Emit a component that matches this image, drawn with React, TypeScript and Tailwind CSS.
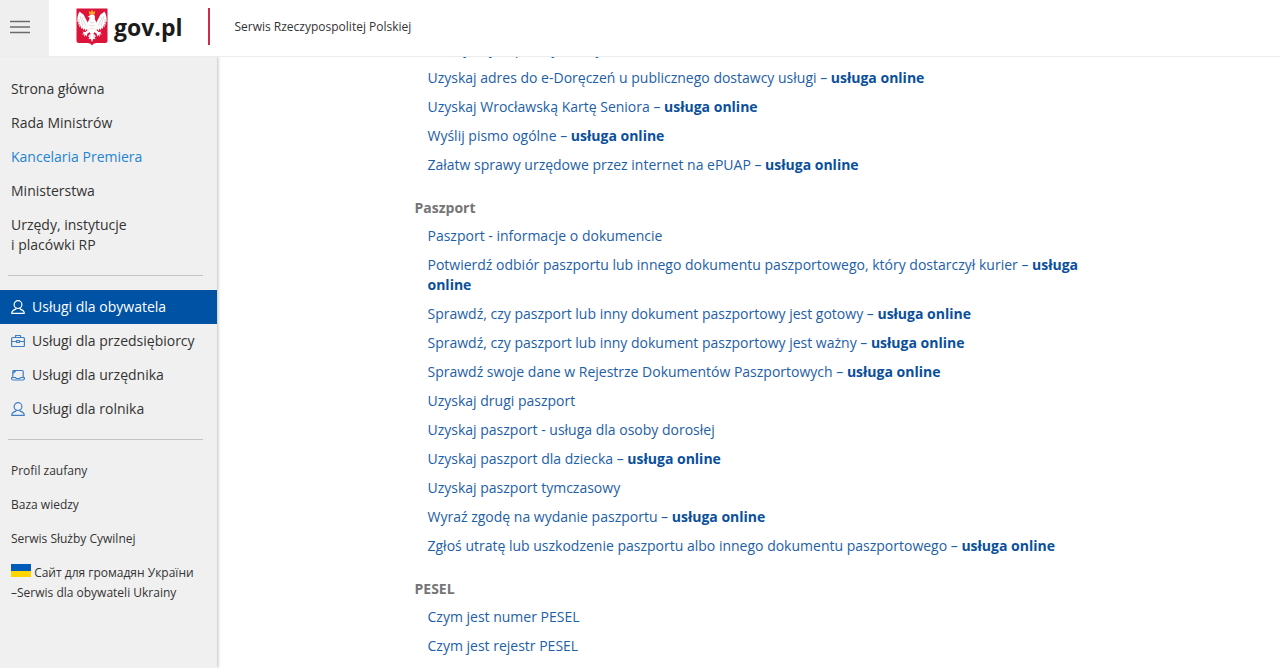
import type { ReactNode } from 'react';

type Item = { label: string; online?: boolean };

const pages = ['Strona główna', 'Rada Ministrów', 'Kancelaria Premiera', 'Ministerstwa'];

const eUslugi: Item[] = [
    { label: 'Skorzystaj z aplikacji mObywatel', online: true },
    { label: 'Uzyskaj adres do e-Doręczeń u publicznego dostawcy usługi', online: true },
    { label: 'Uzyskaj Wrocławską Kartę Seniora', online: true },
    { label: 'Wyślij pismo ogólne', online: true },
    { label: 'Załatw sprawy urzędowe przez internet na ePUAP', online: true },
];

const paszport: Item[] = [
    { label: 'Paszport - informacje o dokumencie' },
    { label: 'Potwierdź odbiór paszportu lub innego dokumentu paszportowego, który dostarczył kurier', online: true },
    { label: 'Sprawdź, czy paszport lub inny dokument paszportowy jest gotowy', online: true },
    { label: 'Sprawdź, czy paszport lub inny dokument paszportowy jest ważny', online: true },
    { label: 'Sprawdź swoje dane w Rejestrze Dokumentów Paszportowych', online: true },
    { label: 'Uzyskaj drugi paszport' },
    { label: 'Uzyskaj paszport - usługa dla osoby dorosłej' },
    { label: 'Uzyskaj paszport dla dziecka', online: true },
    { label: 'Uzyskaj paszport tymczasowy' },
    { label: 'Wyraź zgodę na wydanie paszportu', online: true },
    { label: 'Zgłoś utratę lub uszkodzenie paszportu albo innego dokumentu paszportowego', online: true },
];

const pesel: Item[] = [{ label: 'Czym jest numer PESEL' }, { label: 'Czym jest rejestr PESEL' }];

const Icon = ({ children }: { children: ReactNode }) => (
    <svg viewBox="0 0 14 14" className="h-[14px] w-[14px] shrink-0" fill="none" stroke="currentColor" strokeWidth="1.2" strokeLinejoin="round" aria-hidden="true">
        {children}
    </svg>
);

const PersonIcon = () => (
    <Icon>
        <circle cx="7" cy="4.6" r="3.9" />
        <path d="M4.9 8.2v.9C2.3 9.9.7 10.9.7 13.3h12.6c0-2.4-1.6-3.4-4.2-4.2v-.9" />
    </Icon>
);

const BriefcaseIcon = () => (
    <Icon>
        <rect x=".6" y="3.5" width="12.8" height="9" rx="1" />
        <path d="M4.5 3.5v-2h5v2M.6 7.5h5M8.4 7.5h5M5.6 6.5h2.8v2H5.6z" />
    </Icon>
);

const LaptopIcon = () => (
    <Icon>
        <path d="M1.8 9.5v-6q0-1 1-1h8.4q1 0 1 1v6" />
        <path d="M2.4 3h3L2.4 6z" fill="currentColor" stroke="none" />
        <path d="M.6 9.5h4l.6 1h3.6l.6-1h4v1q0 1.5-1.5 1.5H2.1Q.6 12 .6 10.5z" />
    </Icon>
);

const services = [
    { label: 'Usługi dla obywatela', icon: <PersonIcon />, active: true },
    { label: 'Usługi dla przedsiębiorcy', icon: <BriefcaseIcon /> },
    { label: 'Usługi dla urzędnika', icon: <LaptopIcon /> },
    { label: 'Usługi dla rolnika', icon: <PersonIcon /> },
];

const Emblem = () => (
    <svg viewBox="0 0 32 38" className="h-[38px] w-8" aria-hidden="true">
        <path d="M.5.5h31v32q0 2.500-2.500 2.500H20q-3 0-4 2.500Q15 35 12 35H3Q.5 35 .5 32.500z" fill="#dc143c" />
        <g fill="#fff">
            <path d="M13.5 17C11 14 9.5 10 7.5 6.5 6 5.500 4.500 4.500 3.500 3.500 1.500 7 1 11 1.500 14l1.200-.3-.7 3 1.600-.7-.4 3.200 1.600-1.200.2 3 1.500-1.500.6 2.700 1.300-1.700 1.100 2.400 1.100-2 1.400 1.600 1-2.500z" />
            <path d="M18.5 17C21 14 22.500 10 24.500 6.500c1.500-1 3-2 4-3C30.500 7 31 11 30.500 14l-1.200-.3.7 3-1.600-.7.4 3.200-1.600-1.200-.2 3-1.500-1.500-.6 2.700-1.300-1.700-1.100 2.400-1.100-2-1.400 1.600-1-2.500z" />
            <path d="M13.8 7.500q2-2 4.400-.5 1.300 1.500.6 4 2.200 3 1.700 7.500-.5 4.500-3 7l2.500 2.700-1.500 1 1 2-2.200-.5L16 34l-1.300-3.300-2.200.5 1-2-1.500-1 2.500-2.700q-2.500-2.500-3-7-.5-4.500 2.100-8l-.5-1.500-1.700-.4z" />
            <path d="M12 21.500 9.500 24l-3.200-.3 1.700 1.300-2.200 1.500 2.800-.2-.7 2.400 2-1.800.9 1.900.5-3 2.700-2zM20 21.500l2.500 2.500 3.200-.3-1.700 1.300 2.200 1.500-2.800-.2.7 2.400-2-1.800-.9 1.900-.5-3-2.700-2z" />
        </g>
        <g stroke="#c8c2c6" strokeWidth=".6" fill="none">
            <path d="M4 8l3 10M6 9l3.500 9M28 8l-3 10M26 9l-3.500 9M2.500 11l2 7M29.500 11l-2 7M14 14l2 1 2-1M13.500 17l2.500 1 2.500-1M14 20l2 1 2-1M15 25l-1 4M17 25l1 4" />
        </g>
        <path d="M13.300 6.500 12.700 3l1.800 1L16 1.800 17.500 4l1.800-1-.6 3.500z" fill="#f5a623" />
    </svg>
);

const Section = ({ title, items }: { title?: string; items: Item[] }) => (
    <section>
        {title && <h2 className="mb-2 text-sm leading-5 font-bold text-[#757575]">{title}</h2>}
        <ul className="mb-[23px] flex flex-col gap-[9px] pl-[13px]">
            {items.map(({ label, online }) => (
                <li key={label} className="text-sm leading-5 text-[#1d60a6]">
                    <a href="#" className="hover:underline">
                        {label}
                        {online && <> – <strong className="font-bold text-[#0a4f9c]">usługa online</strong></>}
                    </a>
                </li>
            ))}
        </ul>
    </section>
);

const Header = () => (
    <header className="relative z-10 flex h-[57px] shrink-0 border-b border-[#ececec] bg-white">
        <button aria-label="Menu" className="flex w-[49px] items-center bg-[#efefef] pb-[2px] pl-[10px]">
            <svg viewBox="0 0 20 14" className="h-[14px] w-5" stroke="#6b6b6b" strokeWidth="1.5" aria-hidden="true">
                <path d="M0 1.5h20M0 7h20M0 12.5h20" />
            </svg>
        </button>
        <div className="flex flex-1 items-center pb-[3px] pl-[27px]">
            <a href="#" className="flex items-center gap-[6px] text-[#1b1b1b]">
                <Emblem />
                <span className="text-[23px] leading-8 font-bold">gov.pl</span>
            </a>
            <span className="ml-[26px] h-[37px] w-[2px] bg-[#cf2b46]" />
            <span className="ml-6 text-xs text-[#333]">Serwis Rzeczypospolitej Polskiej</span>
        </div>
    </header>
);

const Sidebar = () => (
    <aside className="w-[217px] shrink-0 bg-[#f0f0f0] pt-[22px] text-[#333] shadow-[1px_0_3px_rgba(0,0,0,0.25)]">
        <nav>
            <ul className="text-sm leading-5">
                {pages.map((page) => (
                    <li key={page}>
                        <a href="#" className={`block px-[11px] pb-[14px] ${page === 'Kancelaria Premiera' ? 'text-[#2484d4]' : ''}`}>{page}</a>
                    </li>
                ))}
                <li>
                    <a href="#" className="block px-[11px]">Urzędy, instytucje<br />i placówki RP</a>
                </li>
            </ul>
            <hr className="mt-5 mr-[14px] mb-[14px] ml-2 border-[#c3c3c3]" />
            <ul className="text-sm">
                {services.map(({ label, icon, active }) => (
                    <li key={label}>
                        <a href="#" className={`flex h-[34px] items-center gap-[7px] px-[11px] ${active ? 'bg-[#0052a5] text-white' : ''}`}>
                            <span className={active ? 'text-white' : 'text-[#3f7fc4]'}>{icon}</span>
                            {label}
                        </a>
                    </li>
                ))}
            </ul>
            <hr className="mt-[13px] mr-[14px] mb-[21px] ml-2 border-[#c3c3c3]" />
            <ul className="flex flex-col gap-[14px] px-[11px] text-xs leading-5">
                <li><a href="#">Profil zaufany</a></li>
                <li><a href="#">Baza wiedzy</a></li>
                <li><a href="#">Serwis Służby Cywilnej</a></li>
                <li>
                    <a href="#">
                        <svg viewBox="0 0 20 13" className="inline-block h-[13px] w-5 align-baseline" aria-hidden="true">
                            <path fill="#005bbb" d="M0 0h20v7H0z" />
                            <path fill="#ffd500" d="M0 7h20v6H0z" />
                        </svg>
                        {' '}Сайт для громадян України<br />–Serwis dla obywateli Ukrainy
                    </a>
                </li>
            </ul>
        </nav>
    </aside>
);

const App = () => (
    <div className="flex h-screen flex-col overflow-hidden bg-white font-['Open_Sans',sans-serif]">
        <Header />
        <div className="flex min-h-0 flex-1">
            <Sidebar />
            <main className="min-w-0 flex-1 overflow-hidden">
                <div className="mx-auto -mt-[18px] w-full max-w-[668px]">
                    <Section items={eUslugi} />
                    <Section title="Paszport" items={paszport} />
                    <Section title="PESEL" items={pesel} />
                </div>
            </main>
        </div>
    </div>
);

export default App;
